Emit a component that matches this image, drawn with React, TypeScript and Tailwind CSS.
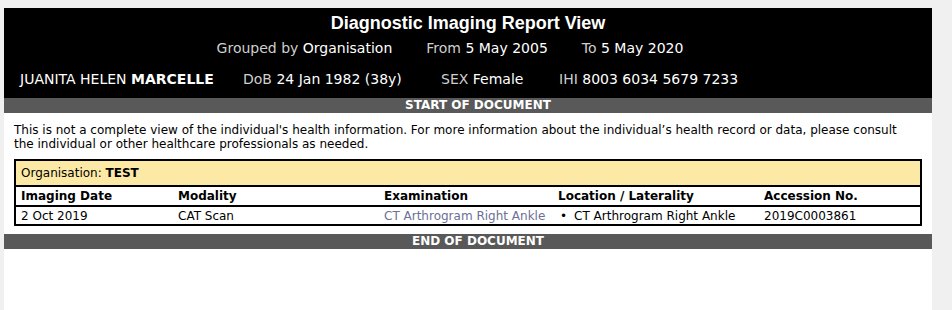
import React from 'react';

type Row = {
  date: string;
  modality: string;
  exam: string;
  location: string;
  accession: string;
};

const rows: Row[] = [
  {
    date: '2 Oct 2019',
    modality: 'CAT Scan',
    exam: 'CT Arthrogram Right Ankle',
    location: 'CT Arthrogram Right Ankle',
    accession: '2019C0003861',
  },
];

const font = "font-['DejaVu_Sans',Verdana,sans-serif]";

const Bar = ({ label }: { label: string }) => (
  <div className="h-[15px] bg-[#595959] pl-5 text-center text-[12px] font-bold leading-[15px] text-white">
    {label}
  </div>
);

export default function App() {
  return (
    <div className={`h-[310px] w-[952px] bg-[#f0f0f0] pt-2 pl-1 ${font}`}>
      <div className="flex h-[302px] w-[928px] flex-col bg-white">
        {/* header */}
        <div className="h-[90px] bg-black text-white">
          <div className="pt-[5px] text-center font-['Liberation_Sans',Arial,sans-serif] text-[18px] font-bold leading-5">
            Diagnostic Imaging Report View
          </div>
          <div className="mt-[7px] flex justify-center gap-[34px] pr-[36px] text-[14px] leading-4">
            <span>
              <span className="text-[#cfcfcf]">Grouped by</span> Organisation
            </span>
            <span>
              <span className="text-[#cfcfcf]">From</span> 5 May 2005
            </span>
            <span>
              <span className="text-[#cfcfcf]">To</span> 5 May 2020
            </span>
          </div>
          <div className="mt-[15px] flex pl-4 text-[14px] leading-4">
            <span className="w-[223px]">
              JUANITA HELEN <b>MARCELLE</b>
            </span>
            <span className="w-[198px]">
              <span className="text-[#cfcfcf]">DoB</span> 24 Jan 1982 (38y)
            </span>
            <span className="w-[118px]">
              <span className="text-[#cfcfcf]">SEX</span> Female
            </span>
            <span>
              <span className="text-[#cfcfcf]">IHI</span> 8003 6034 5679 7233
            </span>
          </div>
        </div>

        <Bar label="START OF DOCUMENT" />

        <p className="pl-[10px] pr-[22px] pt-[10px] text-[12px] leading-[14px] text-black">
          This is not a complete view of the individual's health information. For more information about the
          individual’s health record or data, please consult the individual or other healthcare professionals as
          needed.
        </p>

        <table className="mx-[10px] mt-[8px] w-[908px] border-collapse border-2 border-black text-[12px] leading-[14px] text-black">
          <thead>
            <tr className="h-[26px] border-b-2 border-black bg-[#fde9a6]">
              <td colSpan={5} className="px-[5px]">
                Organisation: <b>TEST</b>
              </td>
            </tr>
            <tr className="h-[20px] border-b-2 border-black text-left">
              <th className="w-[158px] px-[5px]">Imaging Date</th>
              <th className="w-[206px] px-[5px]">Modality</th>
              <th className="w-[174px] px-[5px]">Examination</th>
              <th className="w-[206px] px-[5px]">Location / Laterality</th>
              <th className="px-[5px]">Accession No.</th>
            </tr>
          </thead>
          <tbody>
            {rows.map((r) => (
              <tr key={r.accession} className="h-[19px]">
                <td className="px-[5px]">{r.date}</td>
                <td className="px-[5px]">{r.modality}</td>
                <td className="px-[5px] text-[#6c6f96]">{r.exam}</td>
                <td className="px-[5px]">
                  <span className="mx-[2px] mr-[7px]">•</span>
                  {r.location}
                </td>
                <td className="px-[5px]">{r.accession}</td>
              </tr>
            ))}
          </tbody>
        </table>

        <div className="mt-[8px]">
          <Bar label="END OF DOCUMENT" />
        </div>
      </div>
    </div>
  );
}
